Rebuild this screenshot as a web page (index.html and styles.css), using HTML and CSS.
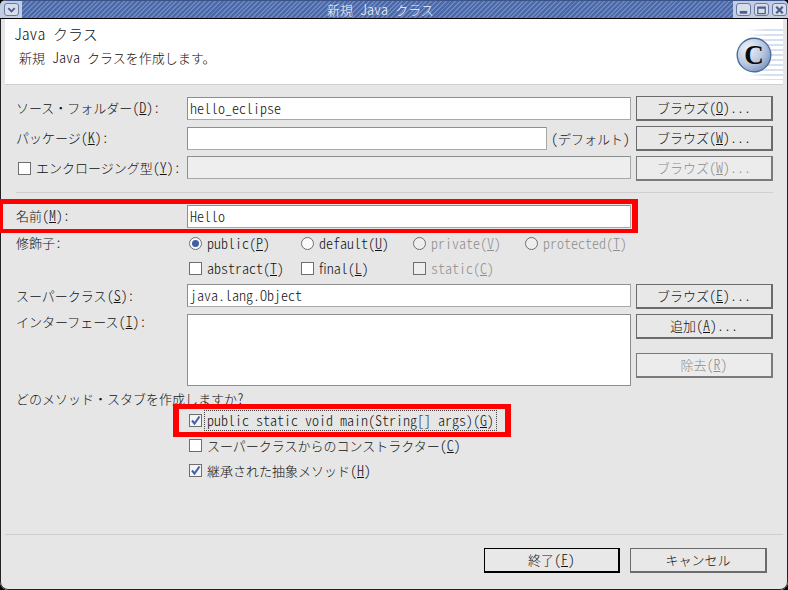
FILE: index.html
```html
<!DOCTYPE html>
<html lang="ja">
<head>
<meta charset="utf-8">
<title>新規 Java クラス</title>
<link rel="stylesheet" href="styles.css">
</head>
<body>
<div class="window">
  <div class="titlebar">
    <div class="tb-menu">
      <span class="tb-btn"><svg width="14" height="12" viewBox="0 0 14 12"><path d="M3.5 4 L7 7.5 L10.5 4" fill="none" stroke="#4c5f8c" stroke-width="2"/></svg></span>
    </div>
    <div class="tb-title">新規<span class="m"> Java </span>クラス</div>
    <div class="tb-controls">
      <span class="tb-btn"><svg width="14" height="12" viewBox="0 0 14 12"><path d="M3 8.5 H11" stroke="#4c5f8c" stroke-width="3" fill="none"/></svg></span>
      <span class="tb-btn"><svg width="14" height="12" viewBox="0 0 14 12"><path d="M3 3 H11 V10 H3 Z M3 4 H11" stroke="#4c5f8c" stroke-width="1.4" fill="none"/></svg></span>
      <span class="tb-btn"><svg width="14" height="12" viewBox="0 0 14 12"><path d="M3.5 2.5 L10.5 9.5 M10.5 2.5 L3.5 9.5" stroke="#4c5f8c" stroke-width="2.4" fill="none"/></svg></span>
    </div>
  </div>
  <div class="frame">
    <header class="banner">
      <div class="banner-text">
        <div class="banner-title"><span class="m">Java </span>クラス</div>
        <div class="banner-desc">新規<span class="m"> Java </span>クラスを作成します。</div>
      </div>
      <div class="banner-art">
        <svg class="class-icon" width="36" height="36" viewBox="0 0 36 36">
          <defs>
            <radialGradient id="orb" cx="0.32" cy="0.3" r="0.85">
              <stop offset="0" stop-color="#eef2f8"/>
              <stop offset="0.55" stop-color="#b9c8e0"/>
              <stop offset="1" stop-color="#6f8cb8"/>
            </radialGradient>
          </defs>
          <circle cx="18" cy="18" r="16.8" fill="url(#orb)" stroke="#4d6c9e" stroke-width="1.4"/>
          <text class="class-letter" x="18" y="27" text-anchor="middle">C</text>
        </svg>
      </div>
    </header>

    <main class="form">
      <div class="row">
        <div class="label">ソース・フォルダー<span class="m">(<u>D</u>):</span></div>
        <div class="field"><span class="m">hello_eclipse</span></div>
        <div class="btn">ブラウズ<span class="m">(<u>O</u>)...</span></div>
      </div>
      <div class="row">
        <div class="label">パッケージ<span class="m">(<u>K</u>):</span></div>
        <div class="field-with-note">
          <div class="field"></div>
          <div class="note"><span class="m">(</span>デフォルト<span class="m">)</span></div>
        </div>
        <div class="btn">ブラウズ<span class="m">(<u>W</u>)...</span></div>
      </div>
      <div class="row">
        <div class="label label-check"><span class="check"></span>エンクロージング型<span class="m">(<u>Y</u>):</span></div>
        <div class="field field-disabled field-top"></div>
        <div class="btn btn-disabled">ブラウズ<span class="m">(<u>W</u>)...</span></div>
      </div>

      <div class="sep"></div>

      <div class="row">
        <div class="label">名前<span class="m">(<u>M</u>):</span></div>
        <div class="field"><span class="m">Hello</span></div>
        <div class="btn-space"></div>
      </div>
      <div class="row row-radio">
        <div class="label">修飾子<span class="m">:</span></div>
        <div class="options">
          <div class="opt"><span class="radio radio-on"></span><span class="m">public(<u>P</u>)</span></div>
          <div class="opt"><span class="radio"></span><span class="m">default(<u>U</u>)</span></div>
          <div class="opt opt-disabled"><span class="radio"></span><span class="m">private(<u>V</u>)</span></div>
          <div class="opt opt-disabled"><span class="radio"></span><span class="m">protected(<u>T</u>)</span></div>
        </div>
      </div>
      <div class="row row-check">
        <div class="label"></div>
        <div class="options">
          <div class="opt"><span class="check"></span><span class="m">abstract(<u>T</u>)</span></div>
          <div class="opt"><span class="check"></span><span class="m">final(<u>L</u>)</span></div>
          <div class="opt opt-disabled"><span class="check"></span><span class="m">static(<u>C</u>)</span></div>
        </div>
      </div>
      <div class="row">
        <div class="label">スーパークラス<span class="m">(<u>S</u>):</span></div>
        <div class="field field-top"><span class="m">java.lang.Object</span></div>
        <div class="btn">ブラウズ<span class="m">(<u>E</u>)...</span></div>
      </div>
      <div class="row row-list">
        <div class="label">インターフェース<span class="m">(<u>I</u>):</span></div>
        <div class="listbox"></div>
        <div class="btn-stack">
          <div class="btn">追加<span class="m">(<u>A</u>)...</span></div>
          <div class="btn btn-disabled">除去<span class="m">(<u>R</u>)</span></div>
        </div>
      </div>

      <div class="stub-title">どのメソッド・スタブを作成しますか<span class="m">?</span></div>
      <div class="stubs">
        <div class="opt stub"><span class="check check-on"><svg width="11" height="11" viewBox="0 0 11 11"><path d="M2 5.5 L4.5 8.5 L9.5 1.5" fill="none" stroke="#3f5fa8" stroke-width="2"/></svg></span><span class="focus"><span class="m">public static void main(String[] args)(<u>G</u>)</span></span></div>
        <div class="opt stub"><span class="check"></span><span>スーパークラスからのコンストラクター<span class="m">(<u>C</u>)</span></span></div>
        <div class="opt stub"><span class="check check-on"><svg width="11" height="11" viewBox="0 0 11 11"><path d="M2 5.5 L4.5 8.5 L9.5 1.5" fill="none" stroke="#3f5fa8" stroke-width="2"/></svg></span><span>継承された抽象メソッド<span class="m">(<u>H</u>)</span></span></div>
      </div>
    </main>

    <footer class="footer">
      <div class="footer-buttons">
        <div class="btn btn-default">終了<span class="m">(<u>F</u>)</span></div>
        <div class="btn">キャンセル</div>
      </div>
    </footer>
  </div>

  <div class="mark mark-name"></div>
  <div class="mark mark-main"></div>
</div>
</body>
</html>
```
FILE: styles.css
```css
* { box-sizing: border-box; }
html, body { margin: 0; padding: 0; }
body { width: 788px; height: 590px; overflow: hidden; background: #000; }

.window {
  position: relative;
  width: 788px;
  height: 590px;
  display: flex;
  flex-direction: column;
  font-family: "Noto Sans CJK JP", "Liberation Mono", monospace;
  font-size: 13px;
  font-weight: 300;
  line-height: 17px;
  color: #111;
  background: #e6e6e6;
  border-radius: 6px 6px 8px 8px;
  overflow: hidden;
}
.m {
  font-family: "Noto Sans CJK JP", monospace;
  font-size: 14px;
  font-feature-settings: "hwid";
  white-space: pre;
}

/* title bar */
.titlebar {
  flex: none;
  height: 19px;
  display: flex;
  align-items: stretch;
  border-top: 1px solid #3d5488;
  border-bottom: 1px solid #000;
  background: repeating-linear-gradient(135deg, #4a69ab 0 2px, #7088bd 2px 3.4px);
}
.tb-menu {
  flex: none;
  width: 22px;
  padding: 2px 0 0 4px;
  background: #c2cde2;
}
.tb-title {
  flex: 1;
  text-align: center;
  color: #f2f4f8;
  line-height: 17px;
  padding-left: 6px;
}
.tb-controls {
  flex: none;
  width: 55px;
  padding: 2px 4px 0 3px;
  display: flex;
  gap: 3px;
  background: #c2cde2;
}
.tb-btn {
  flex: none;
  width: 15px;
  height: 13px;
  display: flex;
  align-items: center;
  justify-content: center;
  border: 1px solid #6a7aa0;
  border-radius: 3px;
  background: #d6deec;
}

/* frame */
.frame {
  flex: 1;
  min-height: 0;
  display: flex;
  flex-direction: column;
  border: 1px solid #222;
  border-top: 0;
  border-radius: 0 0 8px 8px;
  padding: 0 4px 0 4px;
}

/* banner */
.banner {
  flex: none;
  height: 66px;
  display: flex;
  justify-content: space-between;
  background: #fff;
  border-bottom: 1px solid #cfcfcf;
}
.banner-text { padding: 5px 0 0 9px; }
.banner-title { font-size: 15px; line-height: 18px; color: #111; }
.banner-title .m { font-size: 15.6px; }
.banner-desc { margin-top: 5px; padding-left: 5px; line-height: 18px; }
.banner-art {
  width: 46px;
  margin: 10px 0 4px;
  position: relative;
  background:
    linear-gradient(90deg, #fff 0, rgba(255,255,255,0.9) 25%, rgba(255,255,255,0) 65%),
    repeating-linear-gradient(180deg, #d6e0f0 0 2px, #fff 2px 5px);
}
.class-icon { position: absolute; left: -1px; top: 8px; }
.class-letter {
  font-family: "Liberation Serif", serif;
  font-weight: 700;
  font-size: 27px;
  fill: #0a0a0a;
}

/* form */
.form {
  flex: none;
  padding: 11px 10px 0 11px;
  display: flex;
  flex-direction: column;
  gap: 5px;
}
.row {
  display: flex;
  align-items: center;
  height: 25px;
  gap: 5px;
}
.row-radio { height: 21px; margin-top: -1px; }
.row-check { height: 19px; margin-bottom: 1px; }
.row-list { height: 72px; align-items: flex-start; }
.label {
  flex: none;
  width: 166px;
  padding-bottom: 2px;
  white-space: nowrap;
  display: block;
}
.row-list .label { margin-top: -1px; }
.label-check { padding-left: 2px; }
.label-check .check { margin-right: 5px; vertical-align: -2px; }

.field {
  flex: none;
  width: 444px;
  height: 23px;
  padding: 0 2px;
  border: 1px solid #8e8e8e;
  border-right-color: #a8a8a8;
  border-bottom-color: #a8a8a8;
  background: #fff;
  line-height: 21px;
}
.field-top { align-self: flex-start; }
.field-disabled { background: #eeeeee; }
.field-with-note {
  flex: none;
  width: 444px;
  display: flex;
  align-items: center;
  gap: 4px;
}
.field-with-note .field { width: 360px; }
.note { white-space: nowrap; }
.btn-space { flex: none; width: 137px; }

.btn {
  flex: none;
  width: 137px;
  height: 25px;
  padding-bottom: 2px;
  display: flex;
  align-items: center;
  justify-content: center;
  border: 1px solid #6b6b6b;
  border-right-width: 2px;
  border-bottom-width: 2px;
  background: #e8e8e8;
  white-space: nowrap;
}
.btn-disabled { color: #8d8d8d; border-color: #7a7a7a; background: #ececec; }
.btn-default { width: 136px; border-color: #000; }
.btn-stack { flex: none; width: 137px; display: flex; flex-direction: column; gap: 14px; }

.listbox {
  flex: none;
  width: 444px;
  height: 72px;
  background: #fff;
  border: 1px solid #8e8e8e;
}

.sep { height: 1px; margin: 6px 0; background: #cfcfcf; }

.options {
  flex: none;
  width: 448px;
  padding-left: 2px;
  display: grid;
  grid-template-columns: repeat(4, 112px);
}
.opt {
  display: flex;
  align-items: center;
  gap: 5px;
  white-space: nowrap;
}
.opt-disabled { color: #8d8d8d; }

.check, .radio {
  flex: none;
  display: inline-flex;
  align-items: center;
  justify-content: center;
  width: 13px;
  height: 13px;
  border: 1px solid #6e6e6e;
  background: #fff;
}
.check-on { background: #f4f4f4; }
.radio { border-radius: 50%; background: #fafafa; position: relative; }
.radio-on::after {
  content: "";
  width: 7px;
  height: 7px;
  border-radius: 50%;
  background: #3f5fa8;
}
.opt-disabled .check, .opt-disabled .radio { background: #eeeeee; }

.stub-title { height: 17px; margin-top: -1px; }
.stubs {
  margin-top: -2px;
  padding-left: 173px;
  display: flex;
  flex-direction: column;
  gap: 5px;
}
.stub { height: 20px; }
.focus { border: 1px dotted #444; padding: 0 2px; line-height: 18px; margin-left: -3px; }

/* footer */
.footer { margin-top: auto; flex: none; }
.footer::before {
  content: "";
  display: block;
  height: 1px;
  background: #cfcfcf;
}
.footer-buttons {
  display: flex;
  justify-content: flex-end;
  gap: 10px;
  padding: 13px 16px 16px 0;
}

/* red annotation frames */
.mark { position: absolute; border: solid #ff0000; pointer-events: none; }
.mark-name { left: 0; top: 199px; width: 638px; height: 34px; border-width: 5px 6px 4px 3px; }
.mark-main { left: 173px; top: 404px; width: 338px; height: 33px; border-width: 5px 6px 5px 6px; }
```
